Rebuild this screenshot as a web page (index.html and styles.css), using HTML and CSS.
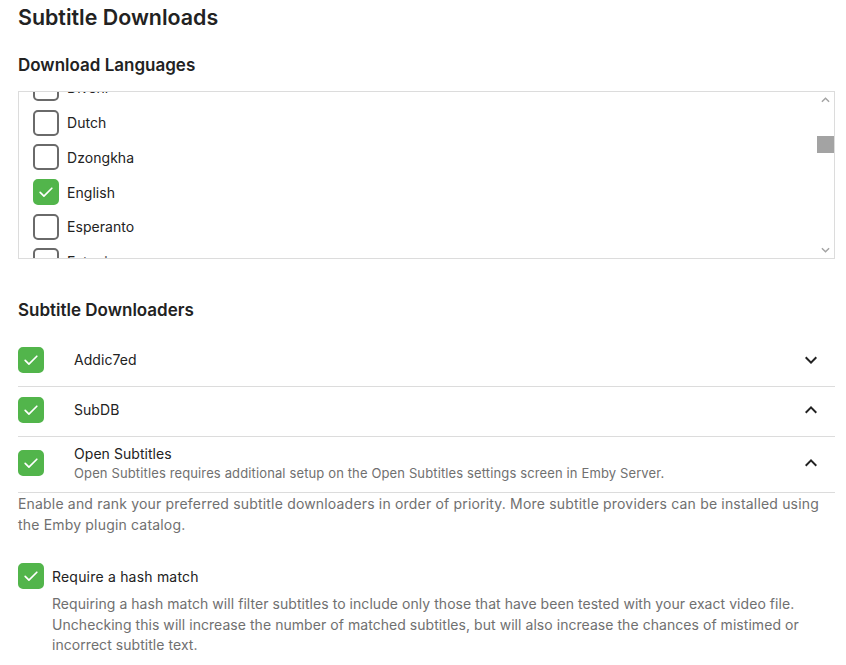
FILE: index.html
```html
<!DOCTYPE html>
<html>
<head>
<meta charset="utf-8">
<link rel="stylesheet" href="styles.css">
</head>
<body>
<div class="page">
  <h1 class="title">Subtitle Downloads</h1>

  <h2 class="section-title">Download Languages</h2>
  <div class="langbox">
    <div class="langviewport">
      <ul class="langlist">
        <li class="lang"><span class="cb"></span><span>Divehi</span></li>
        <li class="lang"><span class="cb"></span><span>Dutch</span></li>
        <li class="lang"><span class="cb"></span><span>Dzongkha</span></li>
        <li class="lang"><span class="cb checked"><svg viewBox="0 0 24 24"><path d="M5 12.5l4.5 4.5L19 7.5"/></svg></span><span>English</span></li>
        <li class="lang"><span class="cb"></span><span>Esperanto</span></li>
        <li class="lang"><span class="cb"></span><span>Estonian</span></li>
      </ul>
    </div>
    <div class="scrollbar">
      <svg class="sb-arrow" viewBox="0 0 10 6"><path d="M1 5l4-4 4 4"/></svg>
      <div class="sb-track"><div class="sb-thumb"></div></div>
      <svg class="sb-arrow" viewBox="0 0 10 6"><path d="M1 1l4 4 4-4"/></svg>
    </div>
  </div>

  <h2 class="section-title downloaders-title">Subtitle Downloaders</h2>
  <div class="providers">
    <div class="provider">
      <span class="cb checked"><svg viewBox="0 0 24 24"><path d="M5 12.5l4.5 4.5L19 7.5"/></svg></span>
      <div class="provider-text"><div class="provider-name">Addic7ed</div></div>
      <svg class="chev" viewBox="0 0 24 24"><path d="M7.41 8.59L12 13.17l4.59-4.58L18 10l-6 6-6-6 1.41-1.41z"/></svg>
    </div>
    <div class="provider">
      <span class="cb checked"><svg viewBox="0 0 24 24"><path d="M5 12.5l4.5 4.5L19 7.5"/></svg></span>
      <div class="provider-text"><div class="provider-name">SubDB</div></div>
      <svg class="chev" viewBox="0 0 24 24"><path d="M7.41 15.41L12 10.83l4.59 4.58L18 14l-6-6-6 6z"/></svg>
    </div>
    <div class="provider provider-tall">
      <span class="cb checked"><svg viewBox="0 0 24 24"><path d="M5 12.5l4.5 4.5L19 7.5"/></svg></span>
      <div class="provider-text">
        <div class="provider-name">Open Subtitles</div>
        <div class="provider-desc">Open Subtitles requires additional setup on the Open Subtitles settings screen in Emby Server.</div>
      </div>
      <svg class="chev" viewBox="0 0 24 24"><path d="M7.41 15.41L12 10.83l4.59 4.58L18 14l-6-6-6 6z"/></svg>
    </div>
  </div>
  <p class="help">Enable and rank your preferred subtitle downloaders in order of priority. More subtitle providers can be installed using the Emby plugin catalog.</p>

  <div class="option">
    <div class="option-row">
      <span class="cb checked"><svg viewBox="0 0 24 24"><path d="M5 12.5l4.5 4.5L19 7.5"/></svg></span>
      <span class="option-label">Require a hash match</span>
    </div>
    <p class="option-help">Requiring a hash match will filter subtitles to include only those that have been tested with your exact video file. Unchecking this will increase the number of matched subtitles, but will also increase the chances of mistimed or incorrect subtitle text.</p>
  </div>
</div>
</body>
</html>
```

FILE: styles.css
```css
* { box-sizing: border-box; }
html, body { margin: 0; padding: 0; background: #fff; }
body {
  font-family: Inter, "Noto Sans", sans-serif;
  color: #222;
  font-size: 14px;
}
.page {
  width: 817px;
  margin-left: 18px;
  padding-top: 5px;
}
.title {
  margin: 0;
  font-size: 21.4px;
  line-height: 24px;
  font-weight: 600;
}
.section-title {
  margin: 26px 0 16px;
  font-size: 17px;
  line-height: 20px;
  font-weight: 600;
}
.langbox {
  display: flex;
  height: 168px;
  border: 1px solid #dcdcdc;
}
.langviewport {
  flex: 1;
  overflow: hidden;
  padding-left: 14px;
}
.langlist {
  list-style: none;
  margin: -21.4px 0 0;
  padding: 0;
}
.lang {
  display: flex;
  align-items: center;
  gap: 8px;
  height: 34.7px;
  font-size: 14px;
  letter-spacing: 0.05px;
}
.cb {
  flex: none;
  width: 26px;
  height: 26px;
  border: 2px solid #6a6a6a;
  border-radius: 5px;
  display: flex;
  align-items: center;
  justify-content: center;
}
.cb.checked {
  background: #52b54b;
  border-color: #52b54b;
}
.cb svg {
  width: 20px;
  height: 20px;
  fill: none;
  stroke: #fff;
  stroke-width: 2;
  stroke-linecap: round;
  stroke-linejoin: round;
}
.scrollbar {
  width: 17px;
  display: flex;
  flex-direction: column;
  align-items: center;
}
.sb-arrow {
  width: 9px;
  height: 6px;
  margin: 5px 0;
  fill: none;
  stroke: #a3a3a3;
  stroke-width: 1.6;
}
.sb-track {
  flex: 1;
  width: 100%;
  padding-top: 28px;
}
.sb-thumb {
  width: 100%;
  height: 17px;
  background: #a3a3a3;
}
.downloaders-title {
  margin-top: 41px;
  margin-bottom: 17px;
}
.providers {
  display: flex;
  flex-direction: column;
}
.provider {
  display: flex;
  align-items: center;
  height: 50px;
  border-bottom: 1px solid #dcdcdc;
  padding: 0 12px 3px 0;
}
.provider-tall {
  height: 56px;
}
.provider-text {
  flex: 1;
  padding-left: 30px;
}
.provider-name {
  font-size: 14px;
  line-height: 20px;
  letter-spacing: 0.05px;
}
.provider-desc {
  font-size: 13px;
  line-height: 18px;
  letter-spacing: 0.13px;
  color: #707070;
}
.chev {
  width: 24px;
  height: 24px;
  fill: #222;
}
.help {
  margin: 0;
  font-size: 14px;
  line-height: 21px;
  letter-spacing: 0.18px;
  color: #707070;
}
.option {
  margin-top: 28px;
}
.option-row {
  display: flex;
  align-items: center;
  gap: 8px;
}
.option-label {
  font-size: 14px;
  letter-spacing: 0.2px;
}
.option-help {
  margin: 5px 0 0 34px;
  font-size: 14px;
  line-height: 20.5px;
  letter-spacing: 0.05px;
  color: #707070;
}
```
